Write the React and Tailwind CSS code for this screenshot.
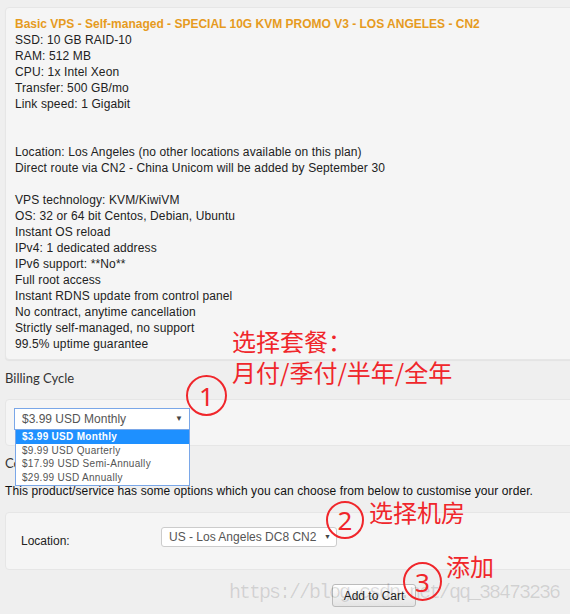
import React from "react";

const specs = [
  "SSD: 10 GB RAID-10",
  "RAM: 512 MB",
  "CPU: 1x Intel Xeon",
  "Transfer: 500 GB/mo",
  "Link speed: 1 Gigabit",
  "",
  "",
  "Location: Los Angeles (no other locations available on this plan)",
  "Direct route via CN2 - China Unicom will be added by September 30",
  "",
  "VPS technology: KVM/KiwiVM",
  "OS: 32 or 64 bit Centos, Debian, Ubuntu",
  "Instant OS reload",
  "IPv4: 1 dedicated address",
  "IPv6 support: **No**",
  "Full root access",
  "Instant RDNS update from control panel",
  "No contract, anytime cancellation",
  "Strictly self-managed, no support",
  "99.5% uptime guarantee",
];

const cycles = [
  "$3.99 USD Monthly",
  "$9.99 USD Quarterly",
  "$17.99 USD Semi-Annually",
  "$29.99 USD Annually",
];

const Mark = ({ n, className }) => (
  <div
    className={
      "absolute flex items-center justify-center rounded-full border-2 border-[#f0262b] text-[#f0262b] text-[26px] leading-none font-['Noto_Sans',sans-serif] " +
      className
    }
  >
    {n}
  </div>
);

export default function App() {
  return (
    <div className="relative h-[614px] overflow-hidden bg-[#efefef] pl-[5px] pt-[7px] font-['Liberation_Sans',Arial,sans-serif] text-[12px] leading-4 text-[#222]">
      {/* plan description */}
      <div className="mr-[-20px] rounded-[4px] border border-[#e6e6e6] bg-[#f5f5f5] pl-[9px] pt-[8px] pb-[7px] shadow-[0_1px_1px_rgba(0,0,0,0.05)]">
        <div className="font-bold text-[#e69b1e]">
          Basic VPS - Self-managed - SPECIAL 10G KVM PROMO V3 - LOS ANGELES - CN2
        </div>
        <div className="tracking-[0.12px]">
          {specs.map((s, i) =>
            s ? <div key={i}>{s}</div> : <div key={i} className="h-4" />
          )}
        </div>
      </div>

      <div className="mt-[8px] font-['Lato',sans-serif] text-[13px] leading-5 text-[#333]">
        Billing Cycle
      </div>

      {/* billing cycle */}
      <div className="relative z-10 mt-[11px] mr-[-20px] rounded-[4px] border border-[#e6e6e6] bg-[#f5f5f5] pl-[8px] pt-[8px] pb-[15px]">
        <div className="relative w-[176px]">
          <div className="flex h-[22px] items-center justify-between border border-[#7aa7e8] bg-white pl-[7px] pr-[6px] text-[12px] text-[#555]">
            <span>$3.99 USD Monthly</span>
            <span className="text-[8px] text-[#444]">▼</span>
          </div>
          <div className="absolute left-[1px] top-[21px] w-[175px] border border-[#7aa7e8] bg-white pb-[1px] text-[10px] leading-[13.5px] tracking-[0.3px] text-[#555]">
            {cycles.map((c, i) => (
              <div
                key={c}
                className={
                  i === 0
                    ? "bg-[#1e90ff] pl-[6px] font-bold text-white"
                    : "pl-[6px]"
                }
              >
                {c}
              </div>
            ))}
          </div>
        </div>
      </div>

      <div className="mt-[7px] font-['Lato',sans-serif] text-[13px] leading-5 text-[#333]">
        Configurable Options
      </div>
      <div className="mt-[10px] tracking-[0.09px] text-[#111]">
        This product/service has some options which you can choose from below to customise your order.
      </div>

      {/* location */}
      <div className="mt-[13px] mr-[-20px] flex h-[58px] items-start rounded-[4px] border border-[#e6e6e6] bg-[#f5f5f5] pl-[15px] pt-[14px]">
        <div className="mt-[6px] w-[140px]">Location:</div>
        <div className="flex h-[20px] w-[176px] items-center justify-between rounded-[3px] border border-[#ccc] bg-white pl-[7px] pr-[5px] text-[12px] text-[#555]">
          <span>US - Los Angeles DC8 CN2</span>
          <span className="text-[7px] text-[#444]">▼</span>
        </div>
      </div>

      <button className="mt-[14px] ml-[327px] h-[23px] w-[84px] rounded-[3px] border border-[#bbb] bg-gradient-to-b from-white to-[#e4e4e4] text-[12px] text-[#222]">
        Add to Cart
      </button>

      {/* watermark */}
      <div className="pointer-events-none absolute left-[229px] top-[583px] font-['Liberation_Mono',monospace] text-[20px] leading-5 tracking-[-2px] text-[rgba(0,0,0,0.13)]">
        https://blog.csdn.net/qq_38473236
      </div>

      {/* annotations */}
      <div className="pointer-events-none absolute left-[232px] top-[325px] z-20 font-['Noto_Sans_CJK_SC',sans-serif] text-[24px] leading-[31px] text-[#f0262b]">
        <div>选择套餐：</div>
        <div>月付/季付/半年/全年</div>
      </div>
      <Mark n="1" className="left-[186px] top-[375px] z-20 h-[41px] w-[41px]" />
      <Mark n="2" className="left-[326px] top-[501px] h-[38px] w-[38px]" />
      <div className="pointer-events-none absolute left-[369px] top-[496px] font-['Noto_Sans_CJK_SC',sans-serif] text-[24px] leading-[32px] text-[#f0262b]">
        选择机房
      </div>
      <Mark n="3" className="left-[403px] top-[562px] h-[39px] w-[39px]" />
      <div className="pointer-events-none absolute left-[446px] top-[550px] font-['Noto_Sans_CJK_SC',sans-serif] text-[24px] leading-[32px] text-[#f0262b]">
        添加
      </div>
    </div>
  );
}
